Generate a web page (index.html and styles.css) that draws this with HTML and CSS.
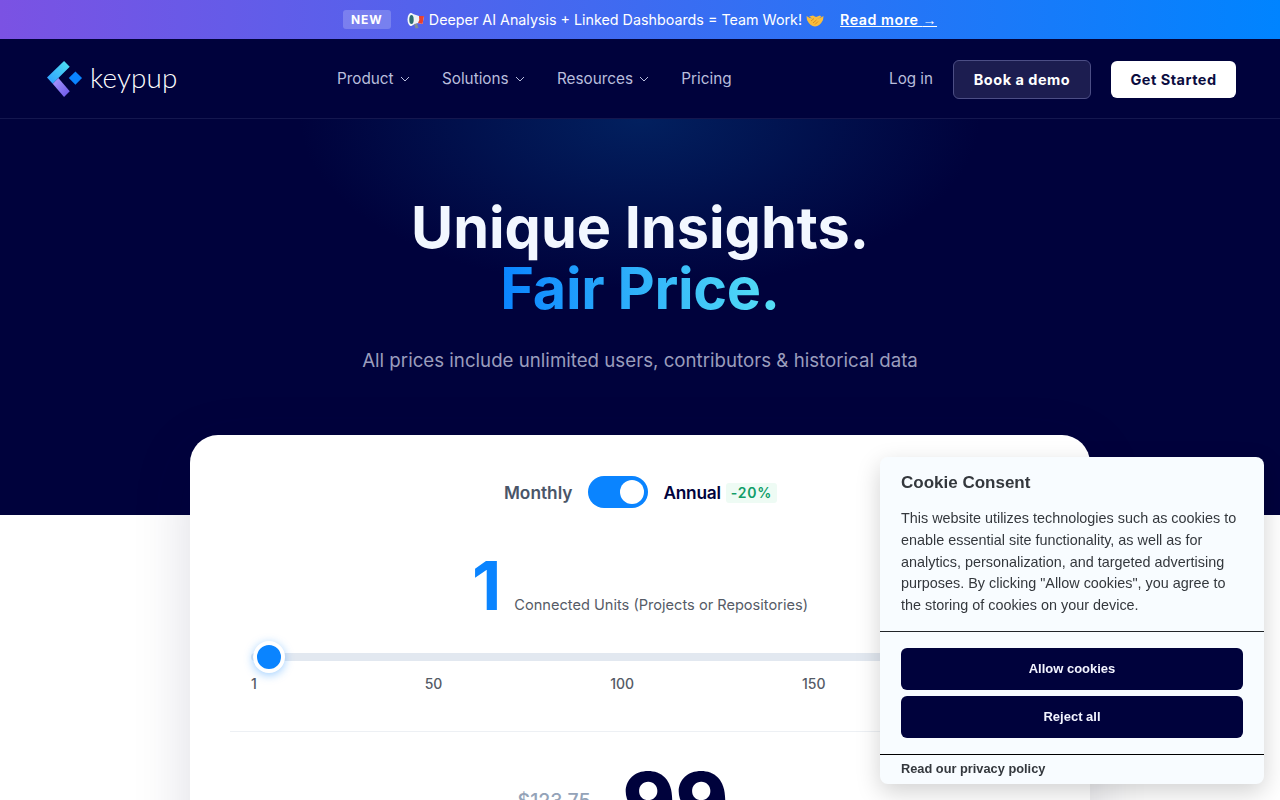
FILE: index.html

```html
<!DOCTYPE html>
<html lang="en">
<head>
    <meta charset="UTF-8">
    <meta name="viewport" content="width=device-width, initial-scale=1.0">
    <title>Keypup Pricing</title>
    <link rel="stylesheet" href="styles.css">
</head>
<body>
    <div class="banner">
        <span class="badge-new">NEW</span>
        <svg class="banner-icon first" viewBox="0 0 18 18">
            <path d="M3 2 L12 5 L17 5 L15.500 13 L11 12 L3 15 Z" fill="#eef3f5"/>
            <path d="M12 5 L17 5 L15.500 13 L11 12 Q13 9 12 5 Z" fill="#e8402f"/>
            <ellipse cx="4" cy="8.500" rx="3.500" ry="6.500" fill="#f4f8fa"/>
            <ellipse cx="4.500" cy="8.500" rx="2.200" ry="4.500" fill="#2f6f73"/>
            <path d="M7 13 L10 12.500 L11.500 17 L8.500 17.500 Z" fill="#7f8c92"/>
        </svg>
        <span class="banner-text">Deeper AI Analysis + Linked Dashboards = Team Work!</span>
        <svg class="banner-icon" viewBox="0 0 18 18">
            <path d="M0.500 5 Q4 8 9 7.500 Q14 8 17.500 5 L17 9 Q14 15 9 15.500 Q4 15 1 9 Z" fill="#f9bd3c"/>
            <path d="M3 5.500 L7 4.500 L10 6 L14 4.500 L15.500 6 L11 8 L7 8 Z" fill="#f9bd3c"/>
            <path d="M5 10 L8 7.500 M7 12 L10.500 9 M9 13.500 L12 10.500" stroke="#d98f1e" stroke-width="1" fill="none"/>
        </svg>
        <a href="#" class="banner-link">Read more <span class="arrow">→</span></a>
    </div>

    <nav class="navbar">
        <a href="#" class="logo">
            <svg class="logo-mark" viewBox="0 0 38 38">
                <defs>
                    <linearGradient id="logo-top" x1="0" y1="1" x2="1" y2="0">
                        <stop offset="0" stop-color="#2f9bff"/>
                        <stop offset="1" stop-color="#4fe3f2"/>
                    </linearGradient>
                    <linearGradient id="logo-bottom" x1="0" y1="0" x2="1" y2="1">
                        <stop offset="0" stop-color="#a99bff"/>
                        <stop offset="1" stop-color="#6a55e8"/>
                    </linearGradient>
                </defs>
                <path d="M0 17.500 L18 0 L24 6 L12 18 L6 24 Z" fill="url(#logo-top)"/>
                <path d="M6 24 L12 18 L24 32 L18 38 Z" fill="url(#logo-bottom)"/>
                <path d="M30 11 L37 18 L30 25 L23 18 Z" fill="#0a84ff"/>
            </svg>
            <span class="logo-text">keypup</span>
        </a>
        <div class="nav-links">
            <a href="#">Product <svg class="chevron" viewBox="0 0 10 6"><path d="M1 1 L5 5 L9 1"/></svg></a>
            <a href="#">Solutions <svg class="chevron" viewBox="0 0 10 6"><path d="M1 1 L5 5 L9 1"/></svg></a>
            <a href="#">Resources <svg class="chevron" viewBox="0 0 10 6"><path d="M1 1 L5 5 L9 1"/></svg></a>
            <a href="#">Pricing</a>
        </div>
        <div class="nav-actions">
            <a href="#" class="login">Log in</a>
            <a href="#" class="btn btn-demo">Book a demo</a>
            <a href="#" class="btn btn-start">Get Started</a>
        </div>
    </nav>

    <header class="hero">
        <h1>Unique Insights.<br><span class="gradient-text">Fair Price.</span></h1>
        <p>All prices include unlimited users, contributors &amp; historical data</p>
    </header>

    <main class="content">
        <section class="card">
            <div class="billing">
                <span class="billing-off">Monthly</span>
                <span class="toggle"><span class="toggle-knob"></span></span>
                <span class="billing-on">Annual</span>
                <span class="discount">-20%</span>
            </div>
            <div class="units">
                <span class="units-value">1</span>
                <span class="units-label">Connected Units (Projects or Repositories)</span>
            </div>
            <div class="slider">
                <div class="slider-track"><span class="slider-thumb"></span></div>
                <div class="slider-labels">
                    <span>1</span>
                    <span>50</span>
                    <span>100</span>
                    <span>150</span>
                    <span>200</span>
                </div>
            </div>
            <div class="price">
                <span class="price-old">$123.75</span>
                <span class="price-new">99</span>
            </div>
        </section>
    </main>

    <aside class="cookie">
        <div class="cookie-body">
            <h2>Cookie Consent</h2>
            <p>This website utilizes technologies such as cookies to enable essential site functionality, as well as for analytics, personalization, and targeted advertising purposes. By clicking "Allow cookies", you agree to the storing of cookies on your device.</p>
        </div>
        <div class="cookie-buttons">
            <button type="button">Allow cookies</button>
            <button type="button">Reject all</button>
        </div>
        <div class="cookie-footer">
            <a href="#">Read our privacy policy</a>
        </div>
    </aside>
</body>
</html>
```

FILE: styles.css

```css
html, body {
    height: 100%;
}
body {
    margin: 0;
    overflow: hidden;
    font-family: Inter, "Liberation Sans", sans-serif;
    background-color: #fff;
    color: #333;
}
a {
    text-decoration: none;
    color: inherit;
}

.banner {
    height: 39px;
    display: flex;
    align-items: center;
    justify-content: center;
    background: linear-gradient(90deg, #7b52e3, #0084ff);
    color: #fff;
    font-size: 14.3px;
}
.badge-new {
    padding: 2px 8px;
    border-radius: 3px;
    background: rgba(255, 255, 255, 0.2);
    font-size: 12px;
    line-height: 15px;
    font-weight: 700;
    letter-spacing: 1px;
}
.banner-icon {
    width: 18px;
    height: 18px;
}
.banner-icon.first {
    margin: 0 4px 0 16px;
}
.banner-text {
    margin-right: 4px;
}
.banner-link {
    margin-left: 16px;
    font-weight: 600;
    letter-spacing: 0.5px;
    text-decoration: underline;
}
.arrow {
    font-family: "Liberation Sans", sans-serif;
    font-weight: 400;
    font-size: 14px;
}

.navbar {
    height: 79px;
    display: flex;
    align-items: center;
    padding: 0 44px 0 47px;
    background: #00023c;
    border-bottom: 1px solid #14174f;
}
.logo {
    width: 290px;
    display: flex;
    align-items: center;
    color: #fff;
}
.logo-mark {
    width: 36px;
    height: 36px;
}
.logo-text {
    margin: -2px 0 0 7px;
    font-family: Lato, sans-serif;
    font-weight: 300;
    font-size: 27.8px;
    line-height: 36px;
    letter-spacing: 0.2px;
}
.nav-links {
    display: flex;
    align-items: center;
    gap: 32px;
    margin-top: -1px;
    color: #b9bedd;
    font-size: 15.3px;
}
.chevron {
    width: 10px;
    height: 6px;
    margin-left: 2px;
    vertical-align: 2px;
    fill: none;
    stroke: #b9bedd;
    stroke-width: 1;
}
.nav-actions {
    margin-left: auto;
    display: flex;
    align-items: center;
    color: #b9bedd;
    font-size: 15.2px;
}
.btn {
    box-sizing: border-box;
    display: block;
    margin-top: 2px;
    font-size: 14.5px;
    font-weight: 700;
    letter-spacing: 0.5px;
    text-align: center;
    border-radius: 6px;
}
.btn-demo {
    width: 138px;
    height: 39px;
    line-height: 37px;
    margin-left: 20px;
    margin-right: 20px;
    color: #fff;
    background: #1c1d50;
    border: 1px solid #4c4e85;
}
.btn-start {
    width: 125px;
    height: 37px;
    line-height: 37px;
    color: #0b0c3f;
    background: #fff;
}

.hero {
    height: 396px;
    box-sizing: border-box;
    padding-top: 78px;
    text-align: center;
    background:
        radial-gradient(ellipse 340px 170px at 50% 0, #02205f 0%, rgba(2, 32, 95, 0) 100%),
        #00023c;
}
.hero h1 {
    margin: 0;
    font-size: 57.6px;
    line-height: 61px;
    font-weight: 700;
    color: #f2f7ff;
}
.gradient-text {
    background: linear-gradient(90deg, #0a84ff, #56e0f5);
    -webkit-background-clip: text;
    background-clip: text;
    color: transparent;
    letter-spacing: -0.35px;
}
.hero p {
    margin: 27px 0 0;
    font-size: 18.7px;
    line-height: 30px;
    color: #9a9dbc;
}

.content {
    padding-bottom: 60px;
}
.card {
    box-sizing: border-box;
    width: 900px;
    margin: -80px auto 0;
    padding: 41px 40px 40px;
    position: relative;
    background: #fff;
    border-radius: 28px;
    box-shadow: 0 16px 60px rgba(0, 2, 60, 0.14);
}
.billing {
    height: 32px;
    padding-left: 1px;
    display: flex;
    align-items: center;
    justify-content: center;
    font-size: 17.28px;
    font-weight: 600;
}
.billing-off {
    margin-top: 1px;
    color: #4a5568;
}
.billing-on {
    margin-top: 1px;
    letter-spacing: -0.25px;
    color: #00023c;
}
.toggle {
    width: 60px;
    height: 32px;
    margin: 0 15px 0 16px;
    display: flex;
    align-items: center;
    justify-content: flex-end;
    padding-right: 4px;
    box-sizing: border-box;
    border-radius: 16px;
    background: #0a84ff;
}
.toggle-knob {
    width: 24px;
    height: 24px;
    border-radius: 50%;
    background: #fff;
}
.discount {
    margin: 2px 0 0 5px;
    padding: 0 5px;
    border-radius: 3px;
    background: #eefbf4;
    color: #0f9d68;
    font-size: 14px;
    line-height: 20px;
    font-weight: 600;
    letter-spacing: 0.8px;
}
.units {
    margin-top: 37px;
    display: flex;
    align-items: flex-end;
    justify-content: center;
    gap: 13px;
}
.units-value {
    font-size: 68px;
    line-height: 80px;
    font-weight: 700;
    color: #0a84ff;
}
.units-label {
    padding-bottom: 10px;
    font-size: 14.6px;
    line-height: 20px;
    color: #555b66;
}
.slider {
    margin-top: 28px;
    padding: 0 0 39px 21px;
    border-bottom: 1px solid #edf0f4;
}
.slider-track {
    height: 8px;
    position: relative;
    margin-right: 20px;
    background: #e2e8f0;
    border-radius: 4px;
}
.slider-thumb {
    box-sizing: border-box;
    position: absolute;
    left: 2px;
    top: -12px;
    width: 32px;
    height: 32px;
    border: 4px solid #fff;
    border-radius: 50%;
    background: #0a84ff;
    box-shadow: 0 2px 10px rgba(10, 132, 255, 0.4);
}
.slider-labels {
    margin: 14px 30px 0 0;
    display: flex;
    justify-content: space-between;
    font-size: 14px;
    line-height: 17px;
    font-weight: 500;
    color: #555b66;
}
.price {
    height: 120px;
    margin-top: 19px;
    padding-right: 34px;
    display: flex;
    align-items: flex-start;
    justify-content: center;
    gap: 32px;
}
.price-old {
    margin-top: 38px;
    font-size: 19.5px;
    line-height: 24px;
    font-weight: 500;
    color: #94a3b8;
    text-decoration: line-through;
}
.price-new {
    font-size: 80px;
    line-height: 100px;
    font-weight: 800;
    color: #00023c;
}

.cookie {
    position: fixed;
    right: 16px;
    bottom: 16px;
    width: 384px;
    background: #f8fcff;
    border-radius: 8px;
    box-shadow: 0 8px 24px rgba(0, 0, 0, 0.18);
    font-family: "Liberation Sans", Arial, sans-serif;
    color: #34383d;
}
.cookie-body {
    padding: 15px 21px 14.250px;
}
.cookie-body h2 {
    margin: 0 0 14px;
    font-size: 17px;
    line-height: 22px;
    font-weight: 700;
}
.cookie-body p {
    margin: 0;
    font-size: 14.4px;
    line-height: 21.750px;
}
.cookie-buttons {
    display: flex;
    flex-direction: column;
    gap: 6px;
    padding: 16px 21px;
    border-top: 1px solid #212529;
    border-bottom: 1px solid #000;
}
.cookie-buttons button {
    height: 42px;
    padding-bottom: 2px;
    border: none;
    border-radius: 6px;
    background: #00023c;
    color: #f2f4ff;
    font-family: inherit;
    font-size: 13px;
    font-weight: 700;
}
.cookie-footer {
    padding: 6px 21px 7px;
    font-size: 12.8px;
    line-height: 16px;
    font-weight: 700;
}
```
